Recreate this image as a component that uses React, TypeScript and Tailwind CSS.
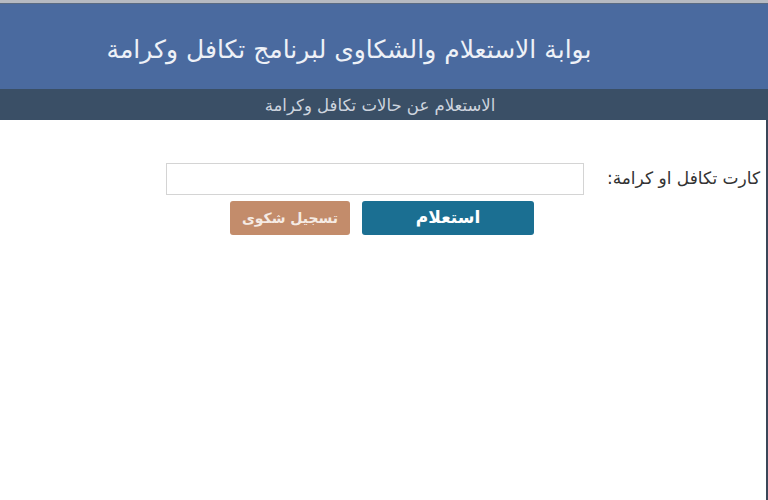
export default function App() {
  return (
    <div
      dir="rtl"
      className="min-h-[500px] flex flex-col bg-white"
      style={{ fontFamily: '"DejaVu Sans", "Noto Sans", sans-serif' }}
    >
      {/* top window strip */}
      <div className="h-[4px] bg-[#b6bac2] border-b border-[#5b6b82]" />

      <header className="h-[85px] bg-[#4a6a9f] flex items-center justify-center">
        <h1 className="text-[25px] text-[#eef1f7] pr-[70px] pt-[6px]">
          بوابة الاستعلام والشكاوى لبرنامج تكافل وكرامة
        </h1>
      </header>

      <div className="h-[31px] bg-[#3a4f66] flex items-center justify-center">
        <h2 className="text-[16.5px] text-[#cdd4de] pr-[8px] pt-[3px]">
          الاستعلام عن حالات تكافل وكرامة
        </h2>
      </div>

      <main className="flex-1 pt-[43px] pr-[6px] border-r-2 border-[#3a4658]">
        <div className="flex items-center gap-[26px]">
          <label className="text-[17px] text-[#333] whitespace-nowrap w-[150px]">
            كارت تكافل او كرامة:
          </label>
          <input
            type="text"
            className="w-[418px] h-[32px] border border-[#d4d4d4] bg-white outline-none"
          />
        </div>
        <div className="flex gap-[12px] mr-[226px] mt-[6px]">
          <button className="w-[172px] h-[34px] rounded-[3px] bg-[#1b6f92] text-white text-[17px] font-bold">
            استعلام
          </button>
          <button className="w-[120px] h-[34px] rounded-[3px] bg-[#c38c6b] text-[#f5ebe4] text-[14px] font-bold">
            تسجيل شكوى
          </button>
        </div>
      </main>
    </div>
  );
}
